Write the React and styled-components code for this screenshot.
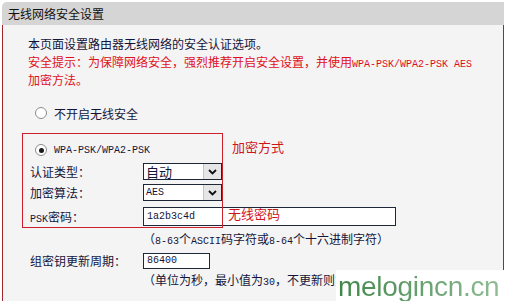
import React from 'react';
import styled, { createGlobalStyle } from 'styled-components';

const GlobalStyle = createGlobalStyle`
  html, body { margin: 0; padding: 0; background: #fff; }
  body {
    font-family: "Noto Sans CJK SC", sans-serif;
    font-size: 12px;
    color: #14143a;
  }
`;

const Page = styled.div`
  position: relative;
  width: 507px;
  height: 301px;
  overflow: hidden;
  padding-top: 2px;
  box-sizing: border-box;
`;

const Panel = styled.div`
  margin-left: 2px;
  width: 502px;
`;

const Header = styled.div`
  height: 23px;
  line-height: 23px;
  background: #d5d5d5;
  border-top-left-radius: 5px;
  padding-left: 6px;
  color: #111;
`;

const Body = styled.div`
  position: relative;
  height: 276px;
  box-sizing: border-box;
  padding: 10px 0 0 25px;
  background: #f4f4f4;
  border-left: 1px solid #a3262a;
  border-right: 1px solid #a3262a;
`;

const Line = styled.div`
  height: 18px;
  line-height: 18px;
  white-space: nowrap;
  color: ${p => (p.$warn ? '#e0101a' : '#14143a')};
`;

const Mono = styled.span`
  font-family: "Liberation Mono", monospace;
  font-size: 10px;
`;

const RadioRow = styled.div`
  display: flex;
  align-items: center;
  gap: 7px;
  height: 18px;
  margin-top: ${p => p.$mt || 0}px;
  margin-left: ${p => p.$ml || 0}px;
  white-space: nowrap;
`;

const Radio = styled.span`
  position: relative;
  width: 12px;
  height: 12px;
  box-sizing: border-box;
  border-radius: 50%;
  border: 1px solid #8c8c8c;
  background: #fff;
  flex-shrink: 0;
  &::after {
    content: '';
    display: ${p => (p.$checked ? 'block' : 'none')};
    position: absolute;
    left: 2.5px;
    top: 2.5px;
    width: 5px;
    height: 5px;
    border-radius: 50%;
    background: #1a1a1a;
  }
`;

const Form = styled.div`
  margin-left: 2px;
`;

const Row = styled.div`
  display: flex;
  align-items: center;
  height: ${p => p.$h}px;
  margin-top: ${p => p.$mt || 0}px;
  white-space: nowrap;
`;

const Label = styled.span`
  width: 113px;
  flex-shrink: 0;
`;

const Hint = styled.div`
  height: 18px;
  line-height: 18px;
  margin-top: ${p => p.$mt || 0}px;
  padding-left: 113px;
  white-space: nowrap;
`;

const SelectBox = styled.div`
  display: flex;
  width: 79px;
  height: 17px;
  box-sizing: border-box;
  border: 1px solid #1c2838;
  background: #fff;
`;

const SelectText = styled.span`
  flex: 1;
  padding-left: 2px;
  line-height: 15px;
  font-size: ${p => (p.$mono ? '10px' : '13px')};
  font-family: ${p => (p.$mono ? '"Liberation Mono", monospace' : 'inherit')};
`;

const SelectButton = styled.span`
  display: flex;
  align-items: center;
  justify-content: center;
  width: 17px;
  background: #e6e6e6;
  border-left: 1px solid #c4c4c4;
`;

const Field = styled.div`
  width: ${p => p.$w}px;
  height: ${p => p.$h}px;
  box-sizing: border-box;
  border: 1px solid #1c2838;
  background: #fff;
  padding-left: 3px;
  line-height: ${p => p.$h - 2}px;
  font-family: "Liberation Mono", monospace;
  font-size: 10px;
  color: #14143a;
`;

const RedBox = styled.div`
  position: absolute;
  left: 19px;
  top: 108px;
  width: 201px;
  height: 95px;
  box-sizing: border-box;
  border: 1px solid #cc1f2a;
  pointer-events: none;
`;

const Note = styled.span`
  position: absolute;
  left: ${p => p.$x}px;
  top: ${p => p.$y}px;
  font-size: 13px;
  line-height: 16px;
  color: #d0141e;
  white-space: nowrap;
`;

const Watermark = styled.div`
  position: absolute;
  left: 336px;
  top: 270px;
  width: 171px;
  height: 31px;
  background: #fff;
  padding-left: 2px;
  box-sizing: border-box;
  font-family: "Liberation Sans", Arial, sans-serif;
  font-size: 28px;
  line-height: 33px;
  letter-spacing: -0.3px;
  white-space: nowrap;
  overflow: hidden;
`;

const WatermarkText = styled.span`
  background: linear-gradient(90deg, #3f8748 0%, #6ea576 60%, #8fbc94 100%);
  -webkit-background-clip: text;
  background-clip: text;
  color: transparent;
`;

const Chevron = () => (
  <svg width="9" height="6" viewBox="0 0 9 6">
    <polyline points="1,1 4.5,4.5 8,1" fill="none" stroke="#111" strokeWidth="1.8" />
  </svg>
);

const Select = ({ value, mono }) => (
  <SelectBox>
    <SelectText $mono={mono}>{value}</SelectText>
    <SelectButton><Chevron /></SelectButton>
  </SelectBox>
);

export default function App() {
  return (
    <>
      <GlobalStyle />
      <Page>
        <Panel>
          <Header>无线网络安全设置</Header>
          <Body>
            <Line>本页面设置路由器无线网络的安全认证选项。</Line>
            <Line $warn>
              安全提示：为保障网络安全，强烈推荐开启安全设置，并使用<Mono>WPA-PSK/WPA2-PSK AES</Mono>
            </Line>
            <Line $warn>加密方法。</Line>

            <RadioRow $mt={15} $ml={7}>
              <Radio />
              <span>不开启无线安全</span>
            </RadioRow>

            <Form>
              <RadioRow $mt={19} $ml={5}>
                <Radio $checked />
                <Mono>WPA-PSK/WPA2-PSK</Mono>
              </RadioRow>
              <Row $h={21} $mt={2}>
                <Label>认证类型：</Label>
                <Select value="自动" />
              </Row>
              <Row $h={21}>
                <Label>加密算法：</Label>
                <Select value="AES" mono />
              </Row>
              <Row $h={23} $mt={2}>
                <Label><Mono>PSK</Mono>密码：</Label>
                <Field $w={253} $h={19}>1a2b3c4d</Field>
              </Row>
              <Hint $mt={2}>
                （<Mono>8-63</Mono>个<Mono>ASCII</Mono>码字符或<Mono>8-64</Mono>个十六进制字符）
              </Hint>
              <Row $h={21} $mt={2}>
                <Label>组密钥更新周期：</Label>
                <Field $w={67} $h={16}>86400</Field>
              </Row>
              <Hint>
                （单位为秒，最小值为<Mono>30</Mono>，不更新则为<Mono>0</Mono>）
              </Hint>
            </Form>

            <RedBox />
            <Note $x={229} $y={114}>加密方式</Note>
            <Note $x={225} $y={181}>无线密码</Note>
          </Body>
        </Panel>
        <Watermark>
          <WatermarkText>melogincn.cn</WatermarkText>
        </Watermark>
      </Page>
    </>
  );
}
